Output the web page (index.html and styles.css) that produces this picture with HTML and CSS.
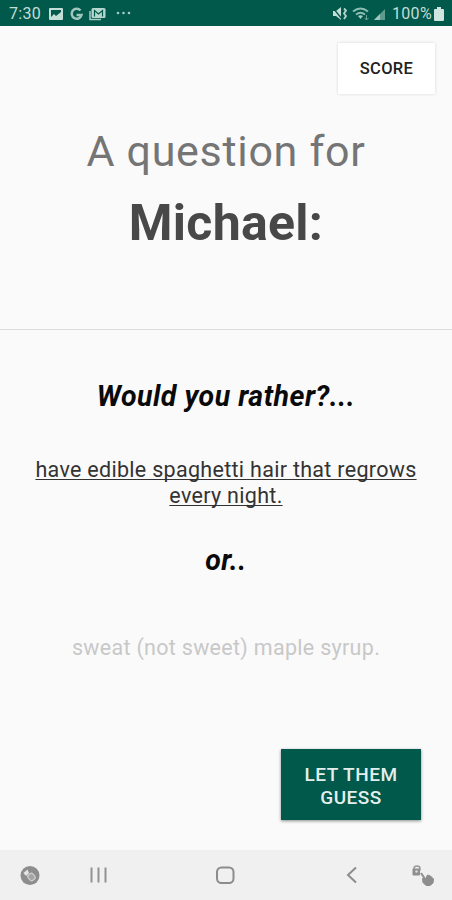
FILE: index.html
```
<!DOCTYPE html>
<html lang="en">
<head>
    <meta charset="UTF-8">
    <meta name="viewport" content="width=device-width, initial-scale=1.0">
    <title>Would you rather</title>
    <link rel="stylesheet" href="styles.css">
</head>
<body>
    <div class="status-bar">
        <span class="time">7:30</span>
        <svg class="icons-left" width="84" height="16" viewBox="0 0 84 16">
            <path fill="#c3ddd7" fill-rule="evenodd" d="M1 2h12q1 0 1 1v10q0 1-1 1H1q-1 0-1-1V3q0-1 1-1zM2 4v7l3-3 2 2 5-4V4z"/>
            <path d="M31.500 4.500A5 5 0 1 0 32.500 9H27.500" fill="none" stroke="#9dc6bd" stroke-width="2.500"/>
            <path d="M41 5v8.500h11" fill="none" stroke="#a5cbc3" stroke-width="1.500"/>
            <rect x="42.500" y="2" width="14" height="10" rx="1.500" fill="#b5d5ce"/>
            <path d="M45.500 10.500V4.500l4 3.500 4-3.500v6" fill="none" stroke="#00594a" stroke-width="1.200"/>
            <g fill="#a5cbc3"><circle cx="69" cy="7" r="1.300"/><circle cx="74.500" cy="7" r="1.300"/><circle cx="80" cy="7" r="1.300"/></g>
        </svg>
        <svg class="icons-right" width="54" height="16" viewBox="0 0 54 16">
            <path d="M0 5h3l5-4v13l-5-4H0z" fill="#c3ddd7"/>
            <path d="M0 2l9 11" stroke="#00594a" stroke-width="1.300"/>
            <path d="M11 2.500l2 2-2 3 2 2.500-2 3" fill="none" stroke="#b5d5ce" stroke-width="1.800"/>
            <path d="M20 5.500q7.500-6 15 0M23 8.500q4.500-3.500 9 0" fill="none" stroke="#8dbcb2" stroke-width="2"/>
            <path d="M25 10q2.500-1.500 5 0l-2.500 3z" fill="#a5cbc3"/>
            <path d="M33.500 9v5M31.500 12l2 2 2-2" fill="none" stroke="#6ca399" stroke-width="1"/>
            <path d="M41 14L52 3v11z" fill="#5f9a8e"/>
            <path d="M41 14l6-6v6z" fill="#9dc6bd"/>
        </svg>
        <span class="percent">100%</span>
        <svg class="battery" width="10" height="14" viewBox="0 0 10 14">
            <path d="M3 0h4v2h2q1 0 1 1v10q0 1-1 1H1q-1 0-1-1V3q0-1 1-1h2z" fill="#d0e5e0"/>
        </svg>
    </div>

    <div class="header">
        <button class="score">SCORE</button>
        <div class="title">A question for</div>
        <div class="name">Michael:</div>
    </div>

    <div class="question">
        <div class="prompt">Would you rather?...</div>
        <div class="option selected">have edible spaghetti hair that regrows<br>every night.</div>
        <div class="prompt or">or..</div>
        <div class="option faded">sweat (not sweet) maple syrup.</div>
        <button class="guess">LET THEM<br>GUESS</button>
    </div>

    <div class="nav-bar">
        <svg width="452" height="50" viewBox="0 0 452 50">
            <circle cx="30" cy="25.500" r="9.500" fill="#8d8d8d"/>
            <path d="M23.500 23l4-3.500 1.500 3.500-3 3z" fill="#e6e6e6"/>
            <rect x="28.500" y="23.500" width="6" height="7" rx="2" transform="rotate(-40 31.500 27)" fill="#a5a5a5" stroke="#d0d0d0" stroke-width="1.200"/>
            <path d="M91.500 17.500v15M98.500 17.500v15M105.500 17.500v15" stroke="#929292" stroke-width="2"/>
            <rect x="217" y="17.500" width="16.500" height="15.500" rx="4.500" fill="none" stroke="#8c8c8c" stroke-width="2"/>
            <path d="M356 17.500l-8 7.500 8 7.500" fill="none" stroke="#8c8c8c" stroke-width="2"/>
            <path d="M414 19v-.5q0-2.500 3-2.500t3 2.500v2" fill="none" stroke="#999" stroke-width="1.500"/>
            <rect x="412.500" y="18.500" width="7.500" height="7" rx="1" fill="#8f8f8f"/>
            <circle cx="416.500" cy="21.500" r="1.200" fill="#ddd"/>
            <path d="M421 23l4 6" stroke="#8f8f8f" stroke-width="2"/>
            <path d="M422.500 28.500l3 .5 2-4 3 1 3 3-.5 4-3 2.500h-4l-3-3z" fill="#8d8d8d" stroke="#8d8d8d" stroke-linejoin="round"/>
        </svg>
    </div>
</body>
</html>
```
FILE: styles.css
```
* {
    box-sizing: border-box;
}
body {
    margin: 0;
    height: 900px;
    display: flex;
    flex-direction: column;
    background-color: #fafafa;
    font-family: Roboto, "Liberation Sans", sans-serif;
    overflow: hidden;
}
button {
    border: none;
    padding: 0;
    font-family: inherit;
    font-weight: 500;
}
.status-bar {
    height: 26px;
    flex: none;
    display: flex;
    align-items: center;
    padding: 1px 8px 0 9px;
    background-color: #00594a;
    color: #c3ddd7;
    font-size: 16px;
    letter-spacing: 0.3px;
}
.time {
    width: 40px;
}
.icons-right {
    margin-left: auto;
    margin-right: 5px;
}
.percent {
    width: 41px;
    margin-right: 1px;
}
.header {
    height: 304px;
    flex: none;
    display: flex;
    flex-direction: column;
    align-items: center;
    border-bottom: 1px solid #dadada;
}
.score {
    align-self: flex-end;
    width: 97px;
    height: 51px;
    margin: 17px 17px 0 0;
    background-color: #fff;
    color: #222;
    font-size: 16.500px;
    letter-spacing: 0.3px;
    box-shadow: 0 0 3px rgba(0, 0, 0, 0.14);
}
.title {
    margin-top: 32px;
    font-size: 43px;
    line-height: 50px;
    letter-spacing: 0.7px;
    color: #757575;
}
.name {
    margin-top: 18px;
    font-size: 50px;
    line-height: 58px;
    font-weight: bold;
    letter-spacing: 0.3px;
    color: #484848;
}
.question {
    flex: 1;
    display: flex;
    flex-direction: column;
    align-items: center;
    text-align: center;
}
.prompt {
    margin-top: 50px;
    font-size: 28.500px;
    line-height: 34px;
    font-weight: bold;
    font-style: italic;
    letter-spacing: 0.5px;
    color: #0a0a0a;
}
.option {
    font-size: 21.500px;
    line-height: 26px;
    letter-spacing: 0.3px;
}
.selected {
    margin-top: 43px;
    color: #333;
    text-decoration: underline;
    text-decoration-thickness: 1px;
    text-underline-offset: 2px;
    text-decoration-skip-ink: none;
}
.or {
    margin-top: 35px;
}
.faded {
    margin-top: 57px;
    color: #c8c8c8;
}
.guess {
    align-self: flex-end;
    width: 140px;
    height: 71px;
    margin: 88px 31px 0 0;
    padding-top: 2px;
    background-color: #00594a;
    color: #e4efed;
    font-size: 19px;
    line-height: 23px;
    letter-spacing: 0.5px;
    box-shadow: 0 1px 3px rgba(0, 0, 0, 0.45);
}
.nav-bar {
    height: 50px;
    flex: none;
    background-color: #f0f0f0;
}
```
